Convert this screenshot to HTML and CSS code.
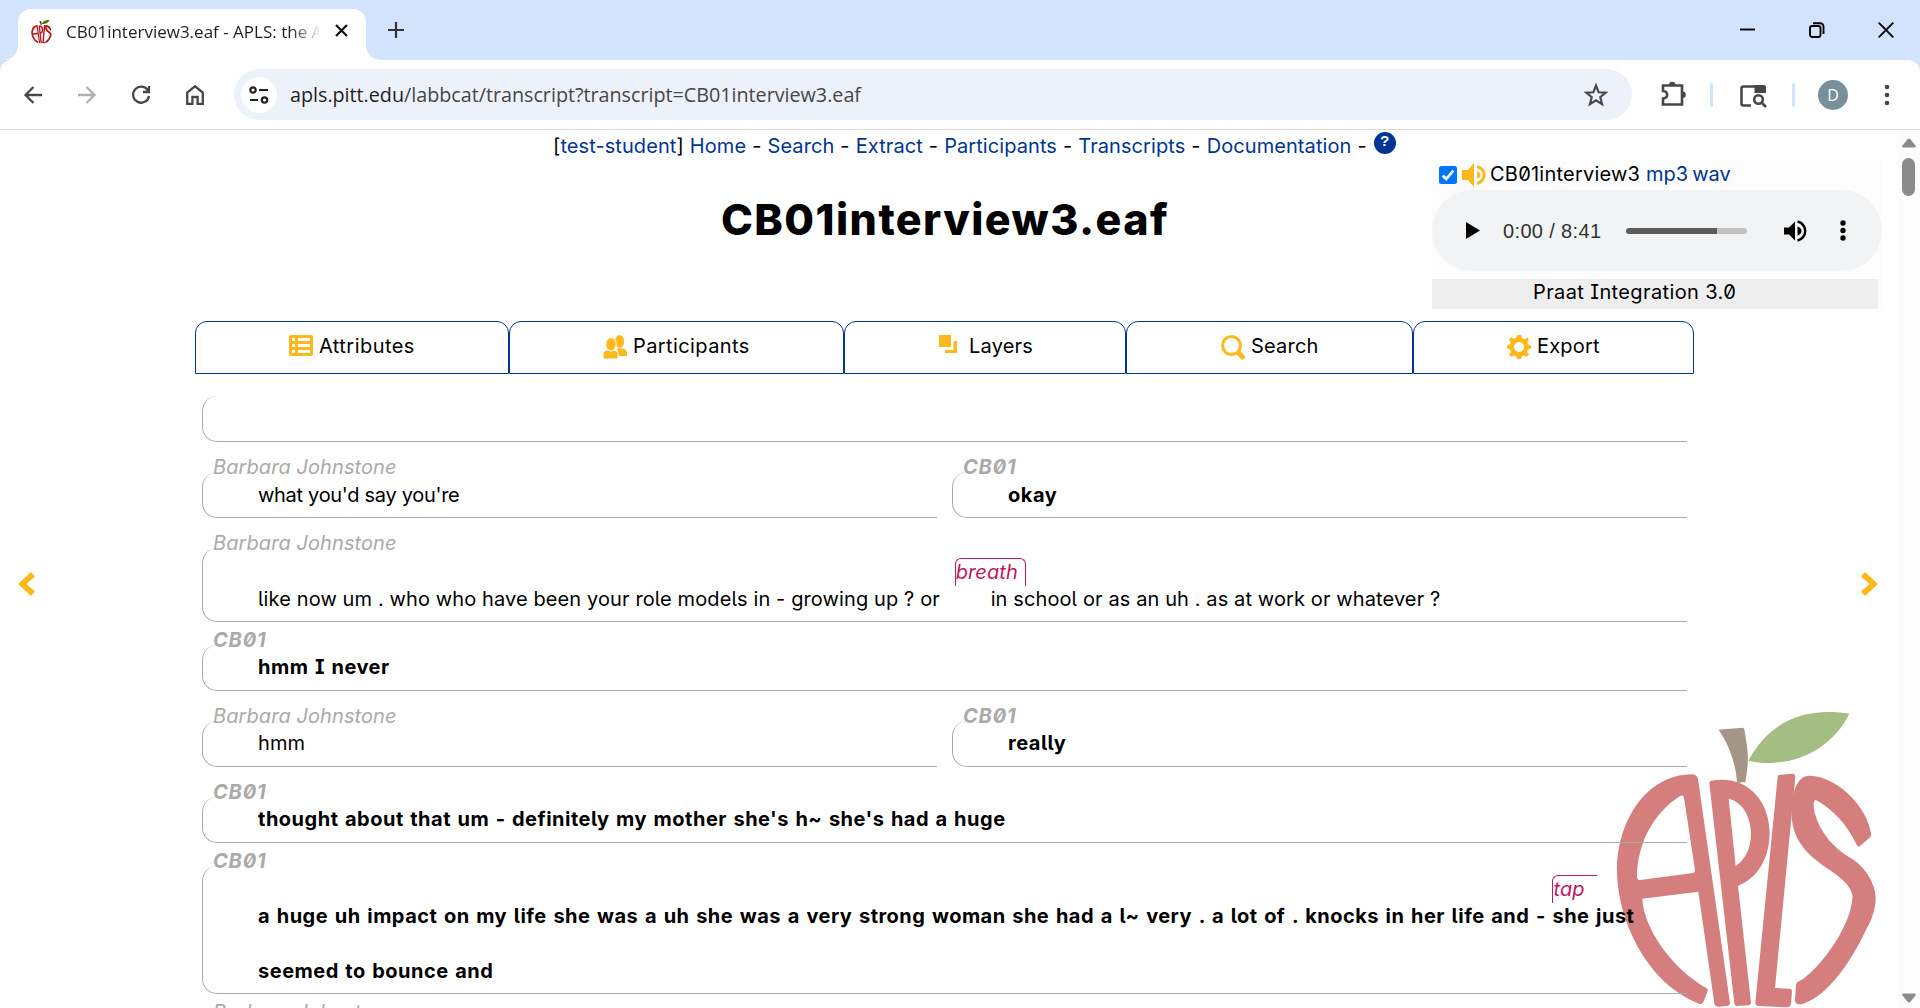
FILE: index.html
```html
<!DOCTYPE html>
<html lang="en">
<head>
<meta charset="utf-8">
<title>CB01interview3.eaf - APLS</title>
<link rel="stylesheet" href="styles.css">
</head>
<body>
<svg class="defs" aria-hidden="true">
  <symbol id="apls" viewBox="0 0 1020 954">
    <g class="apple">
      <path fill-rule="evenodd" d="M334 253Q352 253 354 268L450 940Q450 947 440 948L414 950Q404 950 403 940L355 605L187 626C192 715 270 830 380 895Q385 899 383 904L370 936Q366 944 357 941C200 880 112 690 111 541C112 390 200 255 334 253ZM312 323Q310 313 300 318C220 370 172 460 171 560Q172 571 181 570L339 549Q346 547 345 540Z"/>
      <path fill-rule="evenodd" d="M388 280Q388 273 395 272C500 255 568 330 569 430C568 510 530 565 474 588L513 938Q513 945 506 946L472 948Q464 948 463 940ZM446 326L467 529C500 505 513 470 513 430C512 380 488 336 446 326Z"/>
      <path d="M593 260Q594 254 601 254L637 251Q646 251 646 260L585 894L629 896Q636 897 636 904L633 942Q631 951 622 952L535 948Q526 946 526 938Z"/>
      <path d="M635 360C636 300 655 255 690 257C770 258 862 350 873 430Q875 438 868 444L840 468Q835 472 831 466C800 400 755 355 706 329C698 335 702 355 704 368C720 430 765 475 805 500C850 522 890 580 887 630C885 665 872 695 858 720C810 820 745 915 670 941Q645 948 645 930L648 884Q649 877 657 874C710 845 765 760 778 737C800 695 812 670 818 620C815 580 760 548 735 530C690 500 630 450 635 360Z"/>
    </g>
    <path class="stem" d="M415 119L488 113Q492 113 493 118C505 190 508 205 496 276L471 279C468 215 440 150 415 119Z"/>
    <path class="leaf" d="M505 212C570 90 680 50 808 71C755 180 630 240 505 212Z"/>
  </symbol>
</svg>

<header class="browser">
  <div class="tabstrip">
    <div class="tab">
      <svg class="favicon" viewBox="100 40 800 920"><use href="#apls" width="1020" height="954"/></svg>
      <span class="tab-title">CB01interview3.eaf - APLS: the A</span>
      <svg class="tab-close" viewBox="0 0 13 13"><path d="M1 1 12 12M12 1 1 12"/></svg>
    </div>
    <svg class="new-tab" viewBox="0 0 16 16"><path d="M8 0V16M0 8H16"/></svg>
    <div class="window-buttons">
      <svg viewBox="0 0 16 16"><path d="M0 7.5H15"/></svg>
      <svg viewBox="0 0 16 16"><rect x="1" y="4" width="10.5" height="11" rx="2.2"/><path d="M4 1.2H11Q14.5 1.2 14.5 4.7V12"/></svg>
      <svg viewBox="0 0 16 16"><path d="M.7.7 15.3 15.3M15.3.7.7 15.3"/></svg>
    </div>
  </div>
  <div class="toolbar">
    <div class="nav-buttons">
      <svg viewBox="0 0 18 18"><path d="M18 9H1.5M9.5 1 1.5 9 9.5 17"/></svg>
      <svg class="disabled" viewBox="0 0 18 18"><path d="M0 9H16.5M8.5 1 16.5 9 8.5 17"/></svg>
      <svg viewBox="0 0 18 18"><path d="M16 4.6A8 8 0 1 0 17 10M17 0V6H11"/></svg>
      <svg class="home" viewBox="0 0 18 20"><path d="M1.2 18.8V7.5L9 1.3 16.8 7.5V18.8H11.6V12H6.4V18.8Z"/></svg>
    </div>
    <div class="omnibox">
      <span class="site-info"><svg viewBox="0 0 20 18"><circle cx="4" cy="4" r="2.7"/><path d="M10 4H19M1 14H9"/><circle cx="15.5" cy="14" r="2.7"/></svg></span>
      <span class="url"><b>apls.pitt.edu</b>/labbcat/transcript?transcript=CB01interview3.eaf</span>
      <svg class="star" viewBox="0 0 24 24"><path d="M12 2.5 14.6 9.2 21.8 9.6 16.2 14.2 18.1 21.2 12 17.3 5.9 21.2 7.8 14.2 2.2 9.6 9.4 9.2Z"/></svg>
    </div>
    <div class="tools">
      <svg class="puzzle" viewBox="0 0 25 25"><path d="M2 4.5H21V23.5H2V17.5C7.5 17 7.5 10.5 2 10Z"/><path class="solid" d="M8 4A3.2 3.2 0 0 1 14.4 4ZM21.5 10.5A3.2 3.2 0 0 1 21.5 17Z"/></svg>
      <i></i>
      <svg class="lens" viewBox="0 0 26 23"><path d="M11 20.5H3.5Q1.5 20.5 1.5 18.5V3.5Q1.5 1.5 3.5 1.5H24"/><path class="solid" d="M14.5 0H24Q26 0 26 2V8H14.5Z"/><circle cx="18.5" cy="14.5" r="4.3"/><path d="M21.5 17.5 26 22"/></svg>
      <i></i>
      <span class="avatar">D</span>
      <svg class="kebab" viewBox="0 0 6 22"><circle cx="3" cy="3" r="2.3"/><circle cx="3" cy="11" r="2.3"/><circle cx="3" cy="19" r="2.3"/></svg>
    </div>
  </div>
</header>

<main class="page">
  <div class="viewport">
    <svg class="watermark" viewBox="0 0 1020 954"><use href="#apls"/></svg>
    <nav class="menu">[<a>test-student</a>] <a>Home</a> - <a>Search</a> - <a>Extract</a> - <a>Participants</a> - <a>Transcripts</a> - <a>Documentation</a> - <span class="help">?</span></nav>
    <h1>CB01interview3.eaf</h1>

    <aside class="media">
      <div class="media-title">
        <svg class="check" viewBox="0 0 18 18"><rect width="18" height="18" rx="2.5"/><path d="M3.7 9.5 7.2 13 14.3 4.7"/></svg>
        <svg class="sound" viewBox="0 0 24 24"><path d="M0 7H6L12 0V24L6 17H0Z"/><path d="M15 8.5Q18.5 9.5 18.5 12T15 15.5Z"/><path class="wave" d="M15 3.7A8.4 8.4 0 0 1 15 20.3"/></svg>
        <span class="media-name">CB01interview3</span> <a>mp3</a> <a class="wav">wav</a>
      </div>
      <div class="player">
        <svg class="play" viewBox="0 0 14 17"><path d="M0 0 14 8.5 0 17Z"/></svg>
        <span class="time">0:00 / 8:41</span>
        <span class="volume"></span>
        <svg class="speaker" viewBox="0 0 23 22"><path d="M0 7.5H5L11 1.5V20.5L5 14.5H0Z"/><path d="M13.5 6.5Q17.5 8 17.5 11T13.5 15.5Z"/><path class="wave" d="M13.5 1.5A9.7 9.7 0 0 1 13.5 20.5"/></svg>
        <svg class="dots" viewBox="0 0 6 21"><circle cx="3" cy="3" r="2.7"/><circle cx="3" cy="10.5" r="2.7"/><circle cx="3" cy="18" r="2.7"/></svg>
      </div>
      <div class="praat">Praat Integration 3.0</div>
    </aside>

    <div class="tabs">
      <div class="t1"><svg viewBox="0 0 24 24"><path fill-rule="evenodd" d="M2 0H22Q24 0 24 2V19Q24 21 22 21H2Q0 21 0 19V2Q0 0 2 0ZM3 3V6H6V3ZM9 3V6H21V3ZM3 9V12H6V9ZM9 9V12H21V9ZM3 15V18H6V15ZM9 15V18H21V15Z"/></svg><span>Attributes</span></div>
      <div class="t2"><svg viewBox="0 0 24 24"><ellipse cx="16.500" cy="6.500" rx="4.700" ry="6.500"/><path d="M14 13.500Q22 12 24 16.500V21H16Z"/><path class="gap" d="M0 24V18.500Q0 15.500 4 15 8 17 11 15 15 15.500 15 18.500V24Z"/><ellipse class="gap" cx="8" cy="9.300" rx="5.200" ry="6.700"/></svg><span>Participants</span></div>
      <div class="t3"><svg viewBox="0 0 24 24"><path d="M0 0H12V12H0ZM14.500 6H18V18H6V15H14.500Z"/></svg><span>Layers</span></div>
      <div class="t4"><svg viewBox="0 0 24 24"><circle class="ring" cx="10.500" cy="10.500" r="9"/><path class="handle" d="M17.500 18 21.500 22"/></svg><span>Search</span></div>
      <div class="t5"><svg viewBox="0 0 24 24"><path fill-rule="evenodd" d="M10 0H14L15 3 17.500 4.200 20 2.500 22 4.500 20.500 7 21 9.500 24 10.500V13.500L21 14.500 20 17 22 19.500 19.500 22 17 20.500 15 21.300 14 24H10L9 21.300 7 20.500 4.500 22 2 19.500 4 17 3 14.500 0 13.500V10.500L3 9.500 3.500 7 2 4.500 4.500 2 6.500 4 9 3ZM12 7A5 5 0 1 0 12 17A5 5 0 1 0 12 7Z"/></svg><span>Export</span></div>
    </div>

    <svg class="page-arrow prev" viewBox="0 0 17 24"><path d="M13 0 17 4.500 8.500 12 17 19.500 13 24 0 12Z"/></svg>
    <svg class="page-arrow next" viewBox="0 0 17 24"><path d="M4 0 0 4.500 8.500 12 0 19.500 4 24 17 12Z"/></svg>

    <section class="transcript">
      <div class="row"><div class="turn"><div class="box"></div></div></div>
      <div class="row overlap">
        <div class="turn left"><label>Barbara Johnstone</label><div class="box"><p class="tight">what you'd say you're</p></div></div>
        <div class="turn main"><label>CB01</label><div class="box"><p>okay</p></div></div>
      </div>
      <div class="row overlap">
        <div class="turn"><label>Barbara Johnstone</label><div class="box tall"><p>like now um . who who have been your role models in - growing up ? or <span class="noise"><em class="tag closed">breath</em></span>in school or as an uh . as at work or whatever ?</p></div></div>
      </div>
      <div class="row">
        <div class="turn main"><label>CB01</label><div class="box low"><p>hmm I never</p></div></div>
      </div>
      <div class="row overlap">
        <div class="turn left"><label>Barbara Johnstone</label><div class="box low"><p>hmm</p></div></div>
        <div class="turn main"><label>CB01</label><div class="box low"><p>really</p></div></div>
      </div>
      <div class="row overlap">
        <div class="turn main"><label>CB01</label><div class="box low"><p>thought about that um - definitely my mother she's h~ she's had a huge</p></div></div>
      </div>
      <div class="row">
        <div class="turn main"><label>CB01</label><div class="box tallest"><p class="wide">a huge uh impact on my life she was a uh she was a very strong woman she had a l~ very . a lot of . knocks in her life and - <span class="word"><em class="tag">tap</em>she</span> just</p><p>seemed to bounce and</p></div></div>
      </div>
      <div class="row">
        <div class="turn left"><label>Barbara Johnstone</label><div class="box"></div></div>
      </div>
    </section>
  </div>
  <div class="scrollbar">
    <svg class="up" viewBox="0 0 14 10"><path d="M1 9.500H13Q14.500 9 13.500 7.500L8 .8Q7 0 6 .8L.5 7.500Q-.5 9 1 9.500Z"/></svg>
    <span class="thumb"></span>
    <svg class="down" viewBox="0 0 14 10"><path d="M1 .5H13Q14.500 1 13.500 2.500L8 9.200Q7 10 6 9.200L.5 2.500Q-.5 1 1 .5Z"/></svg>
  </div>
</main>
</body>
</html>
```
FILE: styles.css
```css
* { box-sizing: border-box; }
body {
  margin: 0;
  width: 1920px;
  height: 1008px;
  overflow: hidden;
  display: flex;
  flex-direction: column;
  background: #fff;
  color: #000;
  font: 20px/28px Inter, sans-serif;
  font-feature-settings: "zero", "cv08", "cv05";
  --apple: #d47e7e;
  --stem: #a59586;
  --leaf: #a3bd82;
}
svg { display: block; flex: none; overflow: visible; }
.defs { position: absolute; width: 0; height: 0; }
a { color: #003594; }

/* Browser chrome */
.browser { height: 130px; flex: none; background: #d3e3fd; font-family: "Open Sans", sans-serif; font-feature-settings: normal; }
.tabstrip { height: 60px; display: flex; align-items: flex-start; padding-left: 18px; }
.tab {
  position: relative;
  width: 348px;
  height: 51px;
  margin-top: 9px;
  padding: 0 18px 0 13px;
  display: flex;
  align-items: center;
  background: #fff;
  border-radius: 13px 13px 0 0;
}
.tab::before, .tab::after { content: ""; position: absolute; bottom: 0; width: 14px; height: 14px; }
.tab::before { left: -14px; background: radial-gradient(circle at 0 0, transparent 13.5px, #fff 14px); }
.tab::after { right: -14px; background: radial-gradient(circle at 100% 0, transparent 13.5px, #fff 14px); }
.favicon { width: 21px; height: 25px; margin-bottom: 7px; --apple: #be1216; --stem: #4a2f17; --leaf: #3f7d0c; }
.apple { fill: var(--apple); }
.stem { fill: var(--stem); }
.leaf { fill: var(--leaf); }
.tab-title {
  width: 253px;
  margin: 0 auto 6px 14px;
  overflow: hidden;
  white-space: nowrap;
  font-size: 17px;
  line-height: 26px;
  color: #1f1f1f;
  -webkit-mask-image: linear-gradient(90deg, #000 225px, transparent 256px);
  mask-image: linear-gradient(90deg, #000 225px, transparent 256px);
}
.tab-close { width: 13px; height: 13px; margin-bottom: 8px; fill: none; stroke: #111; stroke-width: 2.2; }
.new-tab { width: 16px; height: 16px; margin: 22px 0 0 22px; fill: none; stroke: #333; stroke-width: 2.2; }
.window-buttons { margin: 22px 26px 0 auto; display: flex; gap: 53px; }
.window-buttons svg { width: 16px; height: 16px; fill: none; stroke: #000; stroke-width: 1.9; }
.toolbar { height: 70px; display: flex; align-items: center; background: #fff; border-bottom: 1px solid #dadce0; border-radius: 12px 12px 0 0; }
.nav-buttons { width: 234px; padding-left: 24px; display: flex; align-items: center; gap: 36px; }
.nav-buttons svg { width: 18px; height: 18px; fill: none; stroke: #474747; stroke-width: 2.3; }
.nav-buttons .disabled { stroke: #b0b0b0; }
.nav-buttons .home { height: 20px; }
.omnibox { width: 1398px; height: 51px; padding: 0 24px 0 7px; display: flex; align-items: center; border-radius: 26px; background: #ecf1fa; }
.site-info { width: 36px; height: 36px; display: grid; place-items: center; border-radius: 50%; background: #fff; }
.site-info svg { width: 20px; height: 18px; fill: none; stroke: #222; stroke-width: 2.2; }
.url { margin: 0 auto 0 13px; font-size: 19.75px; letter-spacing: -.02px; color: #474747; }
.url b { font-weight: 400; color: #1f1f1f; }
.star { width: 24px; height: 24px; fill: none; stroke: #474747; stroke-width: 2.1; }
.tools { display: flex; align-items: center; margin-left: 29px; }
.tools svg { fill: none; stroke: #474747; stroke-width: 2.6; }
.tools svg .solid { fill: #474747; stroke: none; }
.tools i { width: 3px; height: 24px; margin: 0 24px; border-radius: 2px; background: #d3e3fd; }
.puzzle { width: 25px; height: 25px; margin-bottom: 2px; }
.lens { width: 26px; height: 23px; margin-left: 3px; margin-right: 2px; margin-top: 3px; }
.avatar { width: 30px; height: 30px; margin-left: -1px; border-radius: 50%; background: #78909c; color: #fff; text-align: center; font-size: 16px; line-height: 30px; }
.tools .kebab { width: 6px; height: 22px; margin-left: 36px; fill: #474747; stroke: none; }

/* Page */
.page { flex: 1; display: flex; min-height: 0; }
.viewport { position: relative; width: 1897px; overflow: hidden; }
.watermark { position: absolute; left: 1580px; top: 560px; width: 340px; height: 318px; }
.menu { position: relative; height: 32px; padding: 2px 0 0 553px; white-space: pre; letter-spacing: .08px; word-spacing: .3px; }
.help {
  display: inline-block;
  width: 22px;
  height: 22px;
  margin-left: 1px;
  vertical-align: 7px;
  border-radius: 50%;
  background: #003594;
  color: #fff;
  text-align: center;
  font: bold 15px/22px "Liberation Mono", monospace;
}
h1 { margin: 31px 0 0 -7px; text-align: center; font-size: 43px; font-weight: 800; line-height: 52px; letter-spacing: 1.45px; font-feature-settings: normal; }

/* Media panel floats over the upper right corner of the page */
.media { position: absolute; left: 1432px; top: 31px; width: 450px; background: #fcfcfc; }
.media-title { height: 29px; display: flex; align-items: center; padding-left: 7px; }
.media-title span, .media-title a { margin-bottom: 3px; }
.check { width: 18px; height: 18px; margin-bottom: 1px; fill: #0075ff; }
.check path { fill: none; stroke: #fff; stroke-width: 2.6; }
.sound { width: 24px; height: 24px; margin: 0 4px 1px 5px; fill: #ffb81c; }
.sound .wave { fill: none; stroke: #ffb81c; stroke-width: 3; }
.media-name { width: 156px; letter-spacing: .22px; }
.media-title .wav { margin-left: 4px; }
.player { height: 81px; padding: 0 36px 0 34px; display: flex; align-items: center; border-radius: 41px; background: #f1f3f4; }
.play { width: 14px; height: 17px; }
.time { width: 123px; margin-left: 23px; font: 20px/24px "Liberation Sans", sans-serif; letter-spacing: .35px; color: #333; }
.volume { width: 121px; height: 6px; border-radius: 3px; background: linear-gradient(90deg, #5c5c5c 91px, #c2c2c2 91px); }
.speaker { width: 23px; height: 22px; margin-left: 37px; }
.speaker .wave { fill: none; stroke: #000; stroke-width: 2.4; }
.dots { width: 6px; height: 21px; margin-left: 33px; }
.praat { width: 446px; height: 30px; margin-top: 8px; padding-left: 101px; background: #eee; line-height: 26px; letter-spacing: .38px; }

/* Section tabs */
.tabs { display: flex; width: 1499px; height: 53px; margin: 76px 0 0 195px; }
.tabs div { display: flex; padding-top: 10px; border: 1px solid #003594; border-radius: 12px 12px 0 0; letter-spacing: .2px; }
.tabs svg { width: 24px; height: 24px; margin: 3px 6px 0 0; fill: #ffb81c; }
.tabs .t1 { width: 314px; padding-left: 93px; letter-spacing: .45px; }
.tabs .t2 { width: 335px; padding-left: 93px; letter-spacing: .4px; }
.t3 { width: 282px; padding-left: 94px; }
.t4 { width: 287px; padding-left: 94px; }
.t5 { width: 281px; padding-left: 93px; }
.gap { stroke: #fff; stroke-width: 1; }
.ring, .handle { fill: none; stroke: #ffb81c; stroke-width: 3; }
.handle { stroke-width: 5; stroke-linecap: round; }
.page-arrow { position: absolute; top: 442px; width: 17px; height: 24px; fill: #ffb81c; }
.prev { left: 18px; }
.next { left: 1861px; }

/* Transcript */
.transcript { position: relative; width: 1485px; margin: 22px 0 0 202px; }
.row { display: flex; gap: 15px; margin-bottom: 7px; }
.row:first-child { margin-bottom: 0; }
.row.overlap { margin-top: 14px; }
.turn { flex: 1; min-width: 0; }
.turn.left { flex: none; width: 735px; }
.turn label { display: block; width: max-content; height: 24px; margin: 0 0 -8px 11px; line-height: 23px; font-style: italic; color: #aaa; letter-spacing: .08px; }
.box { height: 46px; padding: 0 0 8px 55px; display: flex; flex-direction: column; justify-content: flex-end; border: solid #aaa; border-width: 0 0 1px 1px; border-radius: 15px 0 0 15px; }
.box.low { padding-bottom: 9px; }
.tall { height: 74px; }
.tallest { height: 128px; }
.box p { margin: 0; white-space: nowrap; letter-spacing: .11px; }
.box p + p { margin-top: 27px; }
.box .tight { letter-spacing: -.3px; }
.main { font-weight: 700; }
.main label { letter-spacing: .8px; }
.main .box p { letter-spacing: .51px; word-spacing: 1.2px; }
.main .box .wide { letter-spacing: .46px; word-spacing: 1.5px; }
.noise { position: relative; display: inline-block; width: 45px; height: 20px; vertical-align: top; }
.word { position: relative; }
.tag { position: absolute; left: 9px; top: -27px; height: 28px; padding-right: 12px; border: solid #c0175d; border-width: 1px 0 0 1px; border-top-left-radius: 6px; line-height: 26px; font-weight: 400; font-style: italic; letter-spacing: .1px; color: #c0175d; }
.tag.closed { padding-right: 7px; border-right-width: 1px; border-top-right-radius: 6px; }
.word .tag { left: 0; top: -29px; }

/* Scrollbar */
.scrollbar { width: 23px; display: flex; flex-direction: column; align-items: center; padding: 8px 0 5px; background: #fcfcfc; }
.scrollbar svg { width: 14px; height: 10px; fill: #8b8b8b; }
.thumb { width: 13px; height: 38px; margin-top: 10px; border-radius: 7px; background: #8b8b8b; }
.down { margin-top: auto; }
```
